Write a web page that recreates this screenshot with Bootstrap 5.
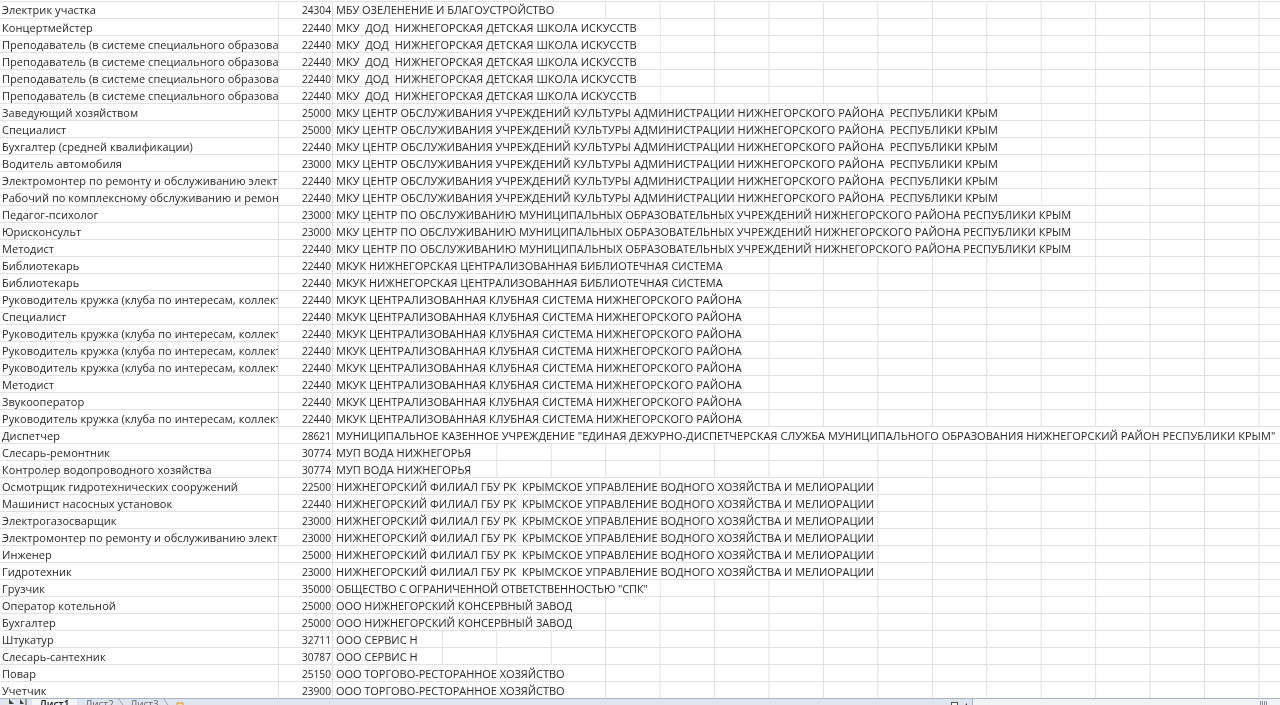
<!doctype html>
<html lang="ru"><head><meta charset="utf-8">
<link href="https://cdn.jsdelivr.net/npm/bootstrap@5.3.0/dist/css/bootstrap.min.css" rel="stylesheet">
<script src="https://cdn.jsdelivr.net/npm/bootstrap@5.3.0/dist/js/bootstrap.bundle.min.js"></script>
<style>
html,body{height:705px;overflow:hidden;background:#fff}
.sheet{font-family:"Open Sans","Noto Sans",sans-serif;font-size:11px;color:#2a2a2a;height:698px;overflow:hidden;padding-top:1px;filter:blur(.3px)}
.xrow{display:flex;height:17px;line-height:18px;border-bottom:1px solid #e2e2e2;background-image:linear-gradient(to right,#e0e0e0 1px,transparent 1px);background-size:54.45px 100%;background-position:333px 0;background-color:#fff}
.xrow:first-child{border-top:1px solid #e2e2e2;height:18px;line-height:16px}
.c1{width:279px;flex:none;padding-left:2px;overflow:hidden;white-space:nowrap;border-right:1px solid #e0e0e0;background:#fff;letter-spacing:.06px}
.c2{width:54px;flex:none;text-align:right;padding-right:1px;border-right:1px solid #e0e0e0;background:#fff;font-size:10.2px}
.c3{flex:none;padding-left:3px;white-space:pre;overflow:hidden;background:#fff}
.s2{width:109px}.s3{width:163px}.s5{width:272px;letter-spacing:-.05px}.s6{width:327px;letter-spacing:.02px}.s8{width:435px}.s10{width:544px}.s13{width:708px;letter-spacing:.03px}.s14{width:762px;letter-spacing:.01px}.s18{width:947px;letter-spacing:.04px}
.s6b{width:327px;letter-spacing:-.13px}
.tabsbar{height:7px;background:#dfe5ee;border-top:1px solid #a9b2bf;font-family:"Open Sans",sans-serif;font-size:10px;line-height:11px;color:#666;overflow:hidden;filter:blur(.3px)}
.navarrows{width:32px;flex:none}
.tabitem{width:45px;flex:none;height:7px;text-align:center;position:relative}
.tabon{background:#f3f5f8;font-weight:600;color:#222}
.tabitem:not(.tabon)::after{content:"";position:absolute;right:0;top:0;height:8px;border-right:1px solid #9aa3b0;transform:skewX(35deg)}
.newsheet{width:36px;flex:none;position:relative}
.gap-fill{flex:1 1 auto}
.viewbtns{width:22px;flex:none}
.scrollb{width:308px;flex:none;background:#f0f3f7;border-left:1px solid #a9b2bf;position:relative}
.grip{position:absolute;left:287px;top:2px;width:8px;height:5px;background:repeating-linear-gradient(to right,#8a8f98 0 1px,#eef1f6 1px 2px)}
</style></head><body>
<div class="sheet">
<div class="xrow"><div class="c1">Электрик участка</div><div class="c2">24304</div><div class="c3 s5">МБУ ОЗЕЛЕНЕНИЕ И БЛАГОУСТРОЙСТВО</div></div>
<div class="xrow"><div class="c1">Концертмейстер</div><div class="c2">22440</div><div class="c3 s6">МКУ  ДОД  НИЖНЕГОРСКАЯ ДЕТСКАЯ ШКОЛА ИСКУССТВ</div></div>
<div class="xrow"><div class="c1">Преподаватель (в системе специального образования)</div><div class="c2">22440</div><div class="c3 s6">МКУ  ДОД  НИЖНЕГОРСКАЯ ДЕТСКАЯ ШКОЛА ИСКУССТВ</div></div>
<div class="xrow"><div class="c1">Преподаватель (в системе специального образования)</div><div class="c2">22440</div><div class="c3 s6">МКУ  ДОД  НИЖНЕГОРСКАЯ ДЕТСКАЯ ШКОЛА ИСКУССТВ</div></div>
<div class="xrow"><div class="c1">Преподаватель (в системе специального образования)</div><div class="c2">22440</div><div class="c3 s6">МКУ  ДОД  НИЖНЕГОРСКАЯ ДЕТСКАЯ ШКОЛА ИСКУССТВ</div></div>
<div class="xrow"><div class="c1">Преподаватель (в системе специального образования)</div><div class="c2">22440</div><div class="c3 s6">МКУ  ДОД  НИЖНЕГОРСКАЯ ДЕТСКАЯ ШКОЛА ИСКУССТВ</div></div>
<div class="xrow"><div class="c1">Заведующий хозяйством</div><div class="c2">25000</div><div class="c3 s13">МКУ ЦЕНТР ОБСЛУЖИВАНИЯ УЧРЕЖДЕНИЙ КУЛЬТУРЫ АДМИНИСТРАЦИИ НИЖНЕГОРСКОГО РАЙОНА  РЕСПУБЛИКИ КРЫМ</div></div>
<div class="xrow"><div class="c1">Специалист</div><div class="c2">25000</div><div class="c3 s13">МКУ ЦЕНТР ОБСЛУЖИВАНИЯ УЧРЕЖДЕНИЙ КУЛЬТУРЫ АДМИНИСТРАЦИИ НИЖНЕГОРСКОГО РАЙОНА  РЕСПУБЛИКИ КРЫМ</div></div>
<div class="xrow"><div class="c1">Бухгалтер (средней квалификации)</div><div class="c2">22440</div><div class="c3 s13">МКУ ЦЕНТР ОБСЛУЖИВАНИЯ УЧРЕЖДЕНИЙ КУЛЬТУРЫ АДМИНИСТРАЦИИ НИЖНЕГОРСКОГО РАЙОНА  РЕСПУБЛИКИ КРЫМ</div></div>
<div class="xrow"><div class="c1">Водитель автомобиля</div><div class="c2">23000</div><div class="c3 s13">МКУ ЦЕНТР ОБСЛУЖИВАНИЯ УЧРЕЖДЕНИЙ КУЛЬТУРЫ АДМИНИСТРАЦИИ НИЖНЕГОРСКОГО РАЙОНА  РЕСПУБЛИКИ КРЫМ</div></div>
<div class="xrow"><div class="c1">Электромонтер по ремонту и обслуживанию электрооборудования</div><div class="c2">22440</div><div class="c3 s13">МКУ ЦЕНТР ОБСЛУЖИВАНИЯ УЧРЕЖДЕНИЙ КУЛЬТУРЫ АДМИНИСТРАЦИИ НИЖНЕГОРСКОГО РАЙОНА  РЕСПУБЛИКИ КРЫМ</div></div>
<div class="xrow"><div class="c1">Рабочий по комплексному обслуживанию и ремонту зданий</div><div class="c2">22440</div><div class="c3 s13">МКУ ЦЕНТР ОБСЛУЖИВАНИЯ УЧРЕЖДЕНИЙ КУЛЬТУРЫ АДМИНИСТРАЦИИ НИЖНЕГОРСКОГО РАЙОНА  РЕСПУБЛИКИ КРЫМ</div></div>
<div class="xrow"><div class="c1">Педагог-психолог</div><div class="c2">23000</div><div class="c3 s14">МКУ ЦЕНТР ПО ОБСЛУЖИВАНИЮ МУНИЦИПАЛЬНЫХ ОБРАЗОВАТЕЛЬНЫХ УЧРЕЖДЕНИЙ НИЖНЕГОРСКОГО РАЙОНА РЕСПУБЛИКИ КРЫМ</div></div>
<div class="xrow"><div class="c1">Юрисконсульт</div><div class="c2">23000</div><div class="c3 s14">МКУ ЦЕНТР ПО ОБСЛУЖИВАНИЮ МУНИЦИПАЛЬНЫХ ОБРАЗОВАТЕЛЬНЫХ УЧРЕЖДЕНИЙ НИЖНЕГОРСКОГО РАЙОНА РЕСПУБЛИКИ КРЫМ</div></div>
<div class="xrow"><div class="c1">Методист</div><div class="c2">22440</div><div class="c3 s14">МКУ ЦЕНТР ПО ОБСЛУЖИВАНИЮ МУНИЦИПАЛЬНЫХ ОБРАЗОВАТЕЛЬНЫХ УЧРЕЖДЕНИЙ НИЖНЕГОРСКОГО РАЙОНА РЕСПУБЛИКИ КРЫМ</div></div>
<div class="xrow"><div class="c1">Библиотекарь</div><div class="c2">22440</div><div class="c3 s8">МКУК НИЖНЕГОРСКАЯ ЦЕНТРАЛИЗОВАННАЯ БИБЛИОТЕЧНАЯ СИСТЕМА</div></div>
<div class="xrow"><div class="c1">Библиотекарь</div><div class="c2">22440</div><div class="c3 s8">МКУК НИЖНЕГОРСКАЯ ЦЕНТРАЛИЗОВАННАЯ БИБЛИОТЕЧНАЯ СИСТЕМА</div></div>
<div class="xrow"><div class="c1">Руководитель кружка (клуба по интересам, коллектива)</div><div class="c2">22440</div><div class="c3 s8">МКУК ЦЕНТРАЛИЗОВАННАЯ КЛУБНАЯ СИСТЕМА НИЖНЕГОРСКОГО РАЙОНА</div></div>
<div class="xrow"><div class="c1">Специалист</div><div class="c2">22440</div><div class="c3 s8">МКУК ЦЕНТРАЛИЗОВАННАЯ КЛУБНАЯ СИСТЕМА НИЖНЕГОРСКОГО РАЙОНА</div></div>
<div class="xrow"><div class="c1">Руководитель кружка (клуба по интересам, коллектива)</div><div class="c2">22440</div><div class="c3 s8">МКУК ЦЕНТРАЛИЗОВАННАЯ КЛУБНАЯ СИСТЕМА НИЖНЕГОРСКОГО РАЙОНА</div></div>
<div class="xrow"><div class="c1">Руководитель кружка (клуба по интересам, коллектива)</div><div class="c2">22440</div><div class="c3 s8">МКУК ЦЕНТРАЛИЗОВАННАЯ КЛУБНАЯ СИСТЕМА НИЖНЕГОРСКОГО РАЙОНА</div></div>
<div class="xrow"><div class="c1">Руководитель кружка (клуба по интересам, коллектива)</div><div class="c2">22440</div><div class="c3 s8">МКУК ЦЕНТРАЛИЗОВАННАЯ КЛУБНАЯ СИСТЕМА НИЖНЕГОРСКОГО РАЙОНА</div></div>
<div class="xrow"><div class="c1">Методист</div><div class="c2">22440</div><div class="c3 s8">МКУК ЦЕНТРАЛИЗОВАННАЯ КЛУБНАЯ СИСТЕМА НИЖНЕГОРСКОГО РАЙОНА</div></div>
<div class="xrow"><div class="c1">Звукооператор</div><div class="c2">22440</div><div class="c3 s8">МКУК ЦЕНТРАЛИЗОВАННАЯ КЛУБНАЯ СИСТЕМА НИЖНЕГОРСКОГО РАЙОНА</div></div>
<div class="xrow"><div class="c1">Руководитель кружка (клуба по интересам, коллектива)</div><div class="c2">22440</div><div class="c3 s8">МКУК ЦЕНТРАЛИЗОВАННАЯ КЛУБНАЯ СИСТЕМА НИЖНЕГОРСКОГО РАЙОНА</div></div>
<div class="xrow"><div class="c1">Диспетчер</div><div class="c2">28621</div><div class="c3 s18">МУНИЦИПАЛЬНОЕ КАЗЕННОЕ УЧРЕЖДЕНИЕ "ЕДИНАЯ ДЕЖУРНО-ДИСПЕТЧЕРСКАЯ СЛУЖБА МУНИЦИПАЛЬНОГО ОБРАЗОВАНИЯ НИЖНЕГОРСКИЙ РАЙОН РЕСПУБЛИКИ КРЫМ"</div></div>
<div class="xrow"><div class="c1">Слесарь-ремонтник</div><div class="c2">30774</div><div class="c3 s3">МУП ВОДА НИЖНЕГОРЬЯ</div></div>
<div class="xrow"><div class="c1">Контролер водопроводного хозяйства</div><div class="c2">30774</div><div class="c3 s3">МУП ВОДА НИЖНЕГОРЬЯ</div></div>
<div class="xrow"><div class="c1">Осмотрщик гидротехнических сооружений</div><div class="c2">22500</div><div class="c3 s10">НИЖНЕГОРСКИЙ ФИЛИАЛ ГБУ РК  КРЫМСКОЕ УПРАВЛЕНИЕ ВОДНОГО ХОЗЯЙСТВА И МЕЛИОРАЦИИ</div></div>
<div class="xrow"><div class="c1">Машинист насосных установок</div><div class="c2">22440</div><div class="c3 s10">НИЖНЕГОРСКИЙ ФИЛИАЛ ГБУ РК  КРЫМСКОЕ УПРАВЛЕНИЕ ВОДНОГО ХОЗЯЙСТВА И МЕЛИОРАЦИИ</div></div>
<div class="xrow"><div class="c1">Электрогазосварщик</div><div class="c2">23000</div><div class="c3 s10">НИЖНЕГОРСКИЙ ФИЛИАЛ ГБУ РК  КРЫМСКОЕ УПРАВЛЕНИЕ ВОДНОГО ХОЗЯЙСТВА И МЕЛИОРАЦИИ</div></div>
<div class="xrow"><div class="c1">Электромонтер по ремонту и обслуживанию электрооборудования</div><div class="c2">23000</div><div class="c3 s10">НИЖНЕГОРСКИЙ ФИЛИАЛ ГБУ РК  КРЫМСКОЕ УПРАВЛЕНИЕ ВОДНОГО ХОЗЯЙСТВА И МЕЛИОРАЦИИ</div></div>
<div class="xrow"><div class="c1">Инженер</div><div class="c2">25000</div><div class="c3 s10">НИЖНЕГОРСКИЙ ФИЛИАЛ ГБУ РК  КРЫМСКОЕ УПРАВЛЕНИЕ ВОДНОГО ХОЗЯЙСТВА И МЕЛИОРАЦИИ</div></div>
<div class="xrow"><div class="c1">Гидротехник</div><div class="c2">23000</div><div class="c3 s10">НИЖНЕГОРСКИЙ ФИЛИАЛ ГБУ РК  КРЫМСКОЕ УПРАВЛЕНИЕ ВОДНОГО ХОЗЯЙСТВА И МЕЛИОРАЦИИ</div></div>
<div class="xrow"><div class="c1">Грузчик</div><div class="c2">35000</div><div class="c3 s6b">ОБЩЕСТВО С ОГРАНИЧЕННОЙ ОТВЕТСТВЕННОСТЬЮ "СПК"</div></div>
<div class="xrow"><div class="c1">Оператор котельной</div><div class="c2">25000</div><div class="c3 s5">ООО НИЖНЕГОРСКИЙ КОНСЕРВНЫЙ ЗАВОД</div></div>
<div class="xrow"><div class="c1">Бухгалтер</div><div class="c2">25000</div><div class="c3 s5">ООО НИЖНЕГОРСКИЙ КОНСЕРВНЫЙ ЗАВОД</div></div>
<div class="xrow"><div class="c1">Штукатур</div><div class="c2">32711</div><div class="c3 s2">ООО СЕРВИС Н</div></div>
<div class="xrow"><div class="c1">Слесарь-сантехник</div><div class="c2">30787</div><div class="c3 s2">ООО СЕРВИС Н</div></div>
<div class="xrow"><div class="c1">Повар</div><div class="c2">25150</div><div class="c3 s5">ООО ТОРГОВО-РЕСТОРАННОЕ ХОЗЯЙСТВО</div></div>
<div class="xrow"><div class="c1">Учетчик</div><div class="c2">23900</div><div class="c3 s5">ООО ТОРГОВО-РЕСТОРАННОЕ ХОЗЯЙСТВО</div></div>
</div>
<div class="tabsbar d-flex">
<div class="navarrows d-flex align-items-start justify-content-center"><svg width="24" height="6" viewBox="0 0 24 6"><path d="M5 0l5 5H5z" fill="#444"/><path d="M16 0l4 5h-4z" fill="#444"/><path d="M22 0v6" stroke="#444" stroke-width="1"/></svg></div>
<span class="tabitem tabon">Лист1</span><span class="tabitem">Лист2</span><span class="tabitem">Лист3</span>
<div class="newsheet"><svg width="30" height="6" viewBox="0 0 30 6"><rect x="10" y="1" width="6" height="5" fill="#f3e2b0" stroke="#d99a3a"/></svg></div>
<div class="gap-fill"></div>
<div class="viewbtns"><svg width="22" height="6" viewBox="0 0 22 6"><rect x="1.5" y="0.5" width="6" height="6" fill="#f4f5f7" stroke="#555"/><path d="M13 6l4-5v5z" fill="#333"/></svg></div>
<div class="scrollb"><div class="grip"></div></div>
</div>
</body></html>
